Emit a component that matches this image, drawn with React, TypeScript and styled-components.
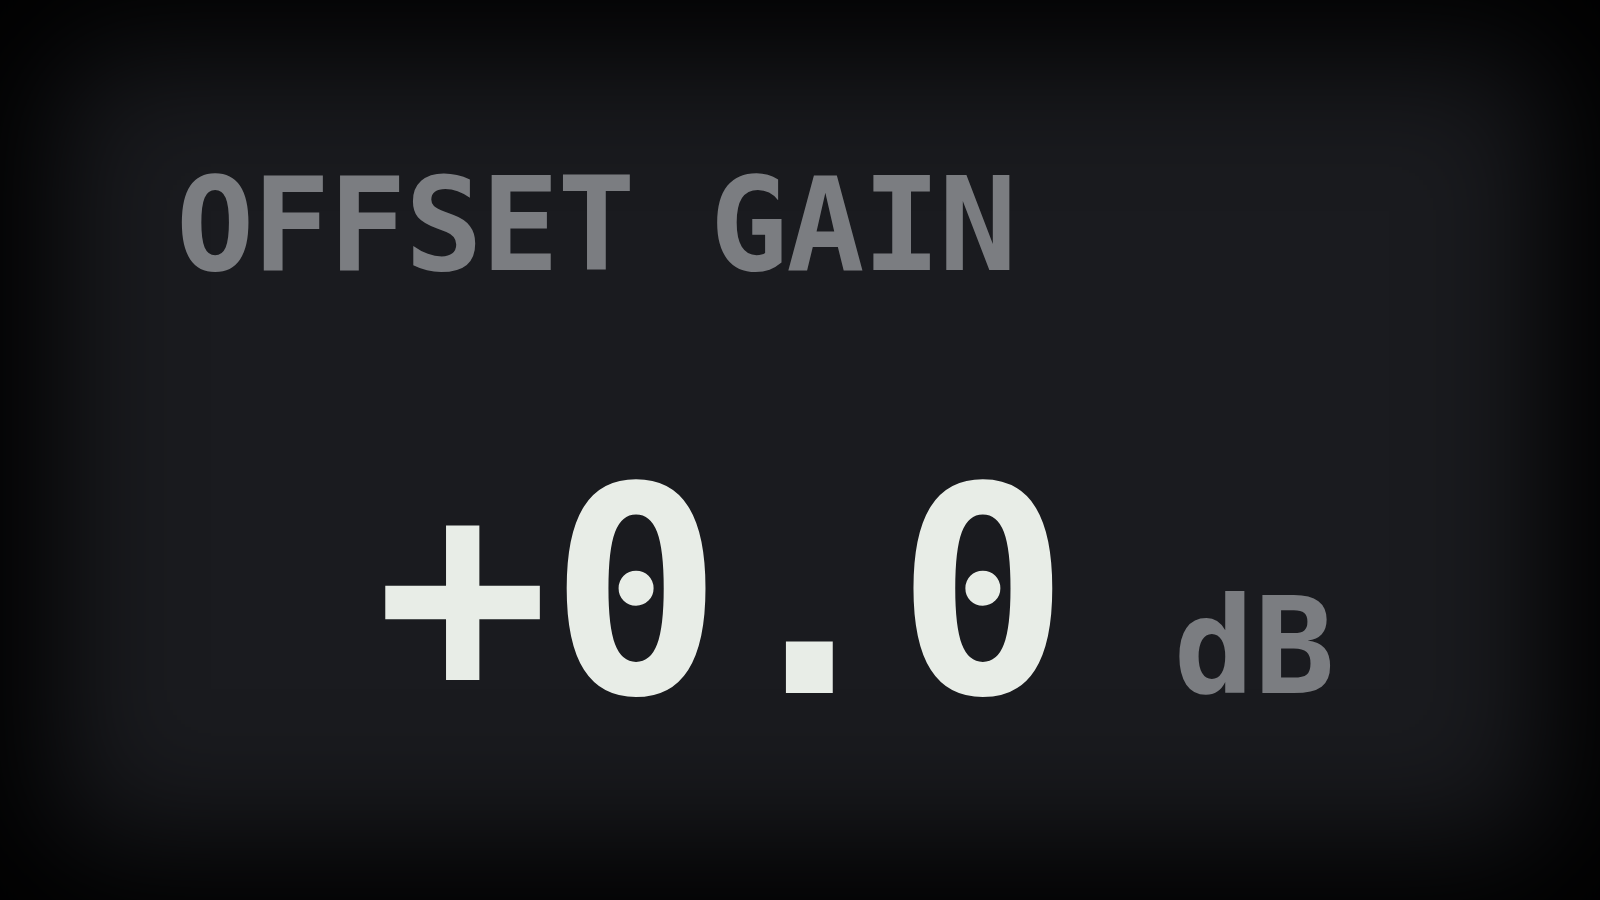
import React from "react";
import styled, { createGlobalStyle } from "styled-components";

const GlobalStyle = createGlobalStyle`
  html, body {
    margin: 0;
    padding: 0;
    background: #000;
  }
  #root {
    width: 100vw;
    height: 100vh;
  }
`;

const Panel = styled.section`
  box-sizing: border-box;
  width: 100vw;
  height: 100vh;
  display: flex;
  flex-direction: column;
  padding: 160px 0 0 176px;
  background: #1a1b1f;
  box-shadow: inset 0 0 130px 55px #000;
  font-family: "DejaVu Sans Mono", "Liberation Mono", monospace;
  overflow: hidden;
`;

const Label = styled.div`
  font-size: 130px;
  line-height: 1;
  font-weight: 700;
  letter-spacing: -2px;
  color: #7b7d81;
  white-space: pre;
`;

const ValueRow = styled.div`
  display: flex;
  align-items: baseline;
  margin-top: 160px;
  padding-left: 200px;
`;

const Value = styled.span`
  font-size: 288px;
  line-height: 1;
  font-weight: 700;
  color: #e8ede7;
  white-space: pre;
`;

const Unit = styled.span<{ $gap: number }>`
  margin-left: ${(p) => p.$gap}px;
  font-size: 134px;
  line-height: 1;
  font-weight: 700;
  color: #7b7d81;
`;

export default function App() {
  const gain = 0;
  const text = `${gain >= 0 ? "+" : "-"}${Math.abs(gain).toFixed(1)}`;
  return (
    <>
      <GlobalStyle />
      <Panel>
        <Label>OFFSET GAIN</Label>
        <ValueRow>
          <Value>{text}</Value>
          <Unit $gap={104}>dB</Unit>
        </ValueRow>
      </Panel>
    </>
  );
}
